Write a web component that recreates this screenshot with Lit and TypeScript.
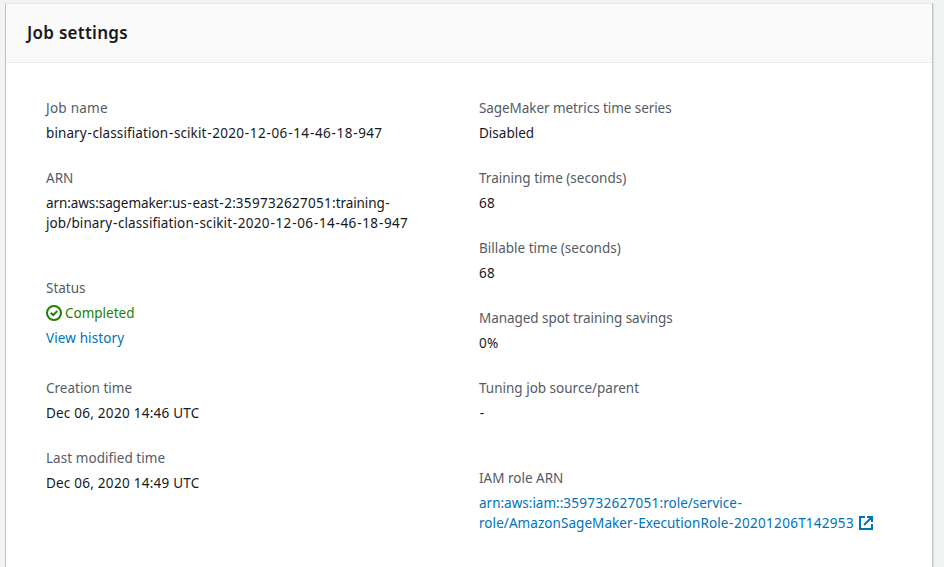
import { LitElement, html, css } from "lit";
import { customElement } from "lit/decorators.js";
import { styleMap } from "lit/directives/style-map.js";

type Line = { text: string; ls?: number };
type Field = { label: Line; lines: Line[]; kind?: "status" | "link"; gap?: "tall" | "medium" };

const left: Field[] = [
  {
    label: { text: "Job name", ls: 0.25 },
    lines: [{ text: "binary-classifiation-scikit-2020-12-06-14-46-18-947", ls: 0.1 }],
  },
  {
    label: { text: "ARN" },
    lines: [
      { text: "arn:aws:sagemaker:us-east-2:359732627051:training-", ls: -0.08 },
      { text: "job/binary-classifiation-scikit-2020-12-06-14-46-18-947", ls: 0.11 },
    ],
    gap: "tall",
  },
  {
    label: { text: "Status" },
    lines: [{ text: "Completed" }, { text: "View history", ls: 0.12 }],
    kind: "status",
    gap: "medium",
  },
  { label: { text: "Creation time" }, lines: [{ text: "Dec 06, 2020 14:46 UTC", ls: 0.2 }] },
  { label: { text: "Last modified time", ls: 0.05 }, lines: [{ text: "Dec 06, 2020 14:49 UTC", ls: 0.2 }] },
];

const right: Field[] = [
  { label: { text: "SageMaker metrics time series", ls: -0.07 }, lines: [{ text: "Disabled" }] },
  { label: { text: "Training time (seconds)" }, lines: [{ text: "68" }] },
  { label: { text: "Billable time (seconds)" }, lines: [{ text: "68" }] },
  { label: { text: "Managed spot training savings", ls: -0.06 }, lines: [{ text: "0%", ls: 1 }] },
  { label: { text: "Tuning job source/parent" }, lines: [{ text: "-" }], gap: "tall" },
  {
    label: { text: "IAM role ARN" },
    lines: [
      { text: "arn:aws:iam::359732627051:role/service-" },
      { text: "role/AmazonSageMaker-ExecutionRole-20201206T142953", ls: 0.06 },
    ],
    kind: "link",
  },
];

@customElement("app-root")
export class AppRoot extends LitElement {
  static styles = css`
    :host {
      display: block;
      box-sizing: border-box;
      height: 567px;
      padding: 3px 11px 0 5px;
      overflow: hidden;
      background: #f2f3f3;
      color: #16191f;
      font: 13.5px/20px "Noto Sans", sans-serif;
      white-space: nowrap;
    }
    .panel {
      box-sizing: border-box;
      height: 564px;
      background: #fff;
      border: 1px solid #bfc5c5;
      border-top-color: #e6e8e8;
      border-bottom: 0;
      box-shadow: 1px 1px 1px rgba(0, 28, 36, 0.08);
    }
    header {
      box-sizing: border-box;
      height: 59px;
      padding: 18px 21px;
      background: #fafafa;
      border-bottom: 1px solid #eaeded;
    }
    h2 {
      margin: 0;
      font-size: 17px;
      line-height: 22px;
      font-weight: 600;
      letter-spacing: 0.27px;
    }
    .columns {
      display: grid;
      grid-template-columns: 433px 1fr;
      padding: 35px 40px 0;
    }
    .field {
      margin-bottom: 25px;
    }
    .medium {
      margin-bottom: 30px;
    }
    .tall {
      margin-bottom: 45px;
    }
    .label {
      height: 20px;
      margin-bottom: 5px;
      color: #545b64;
    }
    .line {
      height: 20px;
      display: flex;
      align-items: center;
    }
    .digits {
      letter-spacing: 0.3px;
    }
    .hyphen {
      letter-spacing: 0;
      margin: 0 0.65px;
    }
    a {
      color: #0073bb;
      text-decoration: none;
    }
    .status {
      color: #1d8102;
      margin-bottom: 5px;
      gap: 3px;
    }
    .external {
      gap: 5px;
    }
    svg {
      display: block;
      flex: none;
      fill: none;
      stroke: currentColor;
      stroke-width: 2;
    }
  `;

  private text(line: Line) {
    const runs = line.text.split(/(\d+|-)/).filter(Boolean);
    return html`<span style=${styleMap({ letterSpacing: `${line.ls ?? 0}px` })}
      >${runs.map((r) =>
        r === "-"
          ? html`<span class="hyphen">-</span>`
          : /^\d/.test(r)
            ? html`<span class="digits">${r}</span>`
            : r,
      )}</span
    >`;
  }

  private value(f: Field) {
    if (f.kind === "status") {
      return html`<div class="line status">
          <svg width="16" height="16" viewBox="0 0 16 16">
            <circle cx="8" cy="8" r="7"></circle>
            <path d="M4.7 7.8 7.2 10.1 11.3 6"></path>
          </svg>
          ${this.text(f.lines[0])}
        </div>
        <div class="line"><a>${this.text(f.lines[1])}</a></div>`;
    }
    if (f.kind === "link") {
      return html`<a>
        <div class="line">${this.text(f.lines[0])}</div>
        <div class="line external">
          ${this.text(f.lines[1])}
          <svg width="14" height="14" viewBox="0 0 14 14">
            <path d="M6 1H1V13H13V8M8 1H13V6M13 1 5 9"></path>
          </svg>
        </div>
      </a>`;
    }
    return f.lines.map((l) => html`<div class="line">${this.text(l)}</div>`);
  }

  private column(fields: Field[]) {
    return html`<div>
      ${fields.map(
        (f) => html`<div class="field ${f.gap ?? ""}">
          <div class="label">${this.text(f.label)}</div>
          ${this.value(f)}
        </div>`,
      )}
    </div>`;
  }

  render() {
    return html`<section class="panel">
      <header><h2>Job settings</h2></header>
      <div class="columns">${this.column(left)}${this.column(right)}</div>
    </section>`;
  }
}
